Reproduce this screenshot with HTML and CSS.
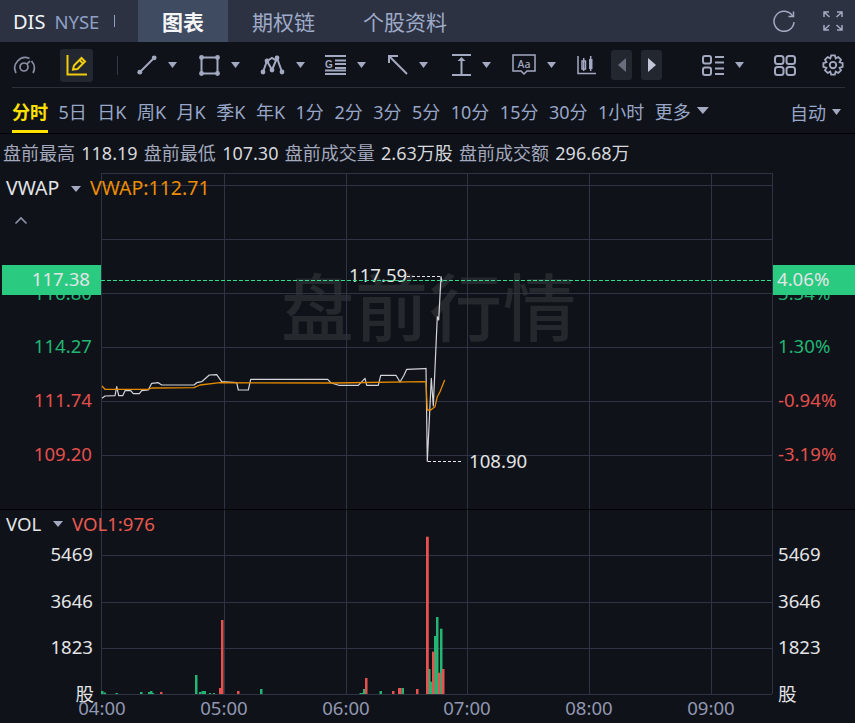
FILE: index.html
```html
<!DOCTYPE html>
<html lang="zh">
<head>
<meta charset="utf-8">
<title>DIS 图表</title>
<link rel="stylesheet" href="styles.css">
</head>
<body>
<div class="app">
  <header class="topbar">
    <div class="symbol"><span class="ticker">DIS</span><span class="market">NYSE</span><span class="pipe"></span></div>
    <nav class="tabs">
      <a class="tab active">图表</a>
      <a class="tab">期权链</a>
      <a class="tab">个股资料</a>
    </nav>
    <div class="top-actions">
      <svg class="i-thin" width="22" height="22" viewBox="0 0 22 22"><path d="M19.500 6A10 10 0 1 0 21 12" /><path d="M20.500 1.500V6.500H15.500" /></svg>
      <svg class="i-thin" width="20" height="20" viewBox="0 0 20 20"><path d="M1 6V1H6M1 1L6.500 6M14 1H19V6M19 1L13.500 6M1 14V19H6M1 19L6.500 14M19 14V19H14M19 19L13.500 14" /></svg>
    </div>
  </header>

  <section class="toolbar">
    <svg class="i-dim" width="24" height="18" viewBox="0 0 24 18"><path d="M4 17A10.500 10.500 0 0 1 17.500 2.500M19.500 5A10.500 10.500 0 0 1 21 17" /><circle cx="12" cy="11" r="4" /><path d="M15 8L18 5" /></svg>
    <button class="tool-on">
      <svg class="i-y" width="22" height="22" viewBox="0 0 22 22"><path d="M1.500 1V20.500H21" /><path d="M7 15.500L8 11.500L15.500 4L19 7.500L11.500 15Z" /><path d="M13.500 6L17 9.500" /></svg>
    </button>
    <span class="vsep"></span>
    <div class="tool ml-19"><svg class="i" width="20" height="20" viewBox="0 0 20 20"><path d="M3 17L17 3" /><circle class="dot" cx="2.800" cy="17.200" r="2.400"/><circle class="dot" cx="17.200" cy="2.800" r="2.400"/></svg><i class="caret"></i></div>
    <div class="tool"><svg class="i" width="21" height="21" viewBox="0 0 21 21"><path d="M2.500 2.500H18.500V18.500H2.500Z" /><circle class="dot" cx="2.500" cy="2.500" r="2.400"/><circle class="dot" cx="18.500" cy="2.500" r="2.400"/><circle class="dot" cx="2.500" cy="18.500" r="2.400"/><circle class="dot" cx="18.500" cy="18.500" r="2.400"/></svg><i class="caret"></i></div>
    <div class="tool ml-20"><svg class="i" width="25" height="20" viewBox="0 0 25 20"><path d="M3 17L7 6L12 15L17 3L22 17" /><path d="M7 6L12 3L17 6" /><circle class="dot" cx="3" cy="17" r="2.400"/><circle class="dot" cx="7" cy="6" r="2.400"/><circle class="dot" cx="12" cy="15" r="2.400"/><circle class="dot" cx="17" cy="3" r="2.400"/><circle class="dot" cx="22" cy="17" r="2.400"/></svg><i class="caret"></i></div>
    <div class="tool ml-20"><svg class="i" width="21" height="20" viewBox="0 0 21 20"><path d="M0 1H21M10 5.500H21M10 9H21M10 13H21M0 15.500H21M0 19H21" /><text class="g-letter" x="0" y="13">G</text></svg><i class="caret"></i></div>
    <div class="tool"><svg class="i" width="20" height="20" viewBox="0 0 20 20"><path d="M1 8V1H10M1 1L19 19" /></svg><i class="caret"></i></div>
    <div class="tool ml-24"><svg class="i" width="19" height="22" viewBox="0 0 19 22"><path d="M0 1H19M0 21H19M9.500 5V21" /><path class="dot" d="M5.500 7L9.500 3L13.500 7Z" /></svg><i class="caret"></i></div>
    <div class="tool ml-21"><svg class="i-thin" width="24" height="22" viewBox="0 0 24 22"><path d="M1 1H23V17H15L12 20L9 17H1Z" /><text class="aa-letter" x="5.500" y="13.500">Aa</text></svg><i class="caret"></i></div>
    <svg class="i-thin ml-21" width="19" height="20" viewBox="0 0 19 20"><path d="M1 1V18.500H19" /><rect x="5" y="6" width="3.500" height="8" /><rect class="dot" x="12" y="4" width="3.500" height="10" /><path d="M6.700 3V16M13.700 1V16" /></svg>
    <div class="nav-btns">
      <button class="nav-btn"><i class="arrow-l"></i></button>
      <button class="nav-btn"><i class="arrow-r"></i></button>
    </div>
    <div class="tool ml-40"><svg class="i" width="22" height="21" viewBox="0 0 22 21"><rect x="1" y="1" width="8" height="7.500" rx="2"/><rect x="1" y="12.500" width="8" height="7.500" rx="2"/><path d="M13 2H22M13 7.500H22M13 13.500H22M13 19H22" /></svg><i class="caret"></i></div>
    <svg class="i ml-30" width="22" height="21" viewBox="0 0 22 21"><rect x="1" y="1" width="8.500" height="8" rx="2.500"/><rect x="12.500" y="1" width="8.500" height="8" rx="2.500"/><rect x="1" y="12" width="8.500" height="8" rx="2.500"/><rect x="12.500" y="12" width="8.500" height="8" rx="2.500"/></svg>
    <svg class="i ml-26" width="22" height="22" viewBox="0 0 24 24"><circle cx="12" cy="12" r="3.500"/><path d="M10 1.500H14L15 4.800L17.800 3.300L20.700 6.200L19.200 9L22.500 10V14L19.200 15L20.700 17.800L17.800 20.700L15 19.200L14 22.500H10L9 19.200L6.200 20.700L3.300 17.800L4.800 15L1.500 14V10L4.800 9L3.300 6.200L6.200 3.300L9 4.800Z" /></svg>
  </section>

  <section class="periods">
    <a class="period active">分时</a>
    <a class="period">5日</a>
    <a class="period">日K</a>
    <a class="period">周K</a>
    <a class="period">月K</a>
    <a class="period">季K</a>
    <a class="period">年K</a>
    <a class="period">1分</a>
    <a class="period">2分</a>
    <a class="period">3分</a>
    <a class="period">5分</a>
    <a class="period">10分</a>
    <a class="period">15分</a>
    <a class="period">30分</a>
    <a class="period">1小时</a>
    <a class="period more">更多<i class="caret big"></i></a>
    <a class="period auto">自动<i class="caret"></i></a>
  </section>

  <section class="stats">盘前最高 <b>118.19</b> 盘前最低 <b>107.30</b> 盘前成交量 <b>2.63万股</b> 盘前成交额 <b>296.68万</b></section>

  <svg class="chart" width="855" height="551" viewBox="0 172 855 551">
    <text class="watermark" x="429" y="335" text-anchor="middle">盘前行情</text>

    <path class="grid" d="M101 173.500H772M101 185.500H772M101 239.500H772M101 293.500H772M101 347.500H772M101 401.500H772M101 455.500H772M101 555.500H772M101 602.500H772M101 648.500H772M101 694.500H772" />
    <path class="grid" d="M101.500 173V694M224.500 173V694M346.500 173V694M467.500 173V694M589.500 173V694M711.500 173V694M772.500 173V694" />
    <path class="split" d="M0 509.500H855" />

    <polyline class="price" points="102,398.300 105,396 115,395.700 116.700,386.700 118.700,395.700 122.700,395.700 125,390.700 130.700,390.700 133.300,393.700 139.300,393.700 141.700,390.700 148.300,390 151.700,383.300 158.300,382.700 161.700,385 194,385 196.700,382.700 201.700,381.700 209.300,375 216.700,374.700 221.700,381.700 236.700,382.700 238.300,390 248.300,390 250.700,379.300 327.700,379.300 330.700,382.700 338.700,385.300 358.300,385.300 365,378.300 366.700,385.300 378.300,385.300 380.700,375.300 396,375.300 400,382 404,375.300 406.700,369.300 425,368.700 426,368.300 427.300,461.300 429,426.700 431.300,378.300 433.300,406 435,368.300 437.300,316.700 438.700,320 441,276.700 442,281.700" />
    <polyline class="avg" points="102,386 105,389.300 148.300,389.300 151.700,388 194,387.700 200,385 220,382.700 333.300,383 425,381.700 426,382.300 427.300,410 430.700,410 435,406.700 437.300,396.700 440,391.700 444.700,380" />

    <path class="mark" d="M407 276.500H441M428 461.500H463" />
    <text class="t white" x="349" y="282">117.59</text>
    <text class="t white" x="469" y="468">108.90</text>

    <g class="bars-up">
      <rect x="101" y="691" width="2.500" height="3"/><rect x="103.500" y="692.500" width="2.500" height="1.500"/><rect x="115.500" y="693" width="2.500" height="1"/><rect x="140" y="692" width="2.500" height="2"/><rect x="148" y="692" width="2.500" height="2"/><rect x="150" y="691" width="2.500" height="3"/><rect x="152" y="693" width="2" height="1"/><rect x="195" y="675" width="2.500" height="19"/><rect x="199" y="692" width="2.500" height="2"/><rect x="201.500" y="691" width="2.500" height="3"/><rect x="203.500" y="691" width="2.500" height="3"/><rect x="209" y="693" width="2" height="1"/><rect x="213" y="693" width="2" height="1"/><rect x="260" y="689" width="2.500" height="5"/><rect x="359.500" y="693" width="2.500" height="1"/><rect x="361.500" y="693" width="2.500" height="1"/><rect x="363" y="689" width="2.500" height="5"/><rect x="379.500" y="691" width="2.500" height="3"/><rect x="401.500" y="688" width="2.500" height="6"/><rect x="428" y="669" width="2.500" height="25"/><rect x="430" y="681.700" width="2.500" height="12.300"/><rect x="434" y="636" width="2.500" height="58"/><rect x="436" y="617" width="2.500" height="77"/><rect x="440" y="628.700" width="2.500" height="65.300"/>
    </g>
    <g class="bars-down">
      <rect x="160" y="692" width="2.500" height="2"/><rect x="219" y="688" width="2.500" height="6"/><rect x="221" y="620" width="2.500" height="74"/><rect x="237" y="691" width="2.500" height="3"/><rect x="365" y="678" width="2.500" height="16"/><rect x="392" y="691" width="2.500" height="3"/><rect x="398" y="688" width="3.500" height="6"/><rect x="416" y="689" width="2.500" height="5"/><rect x="426" y="536.700" width="2.800" height="157.300"/><rect x="432" y="651.700" width="2.500" height="42.300"/><rect x="438" y="672.700" width="2.500" height="21.300"/><rect x="442" y="669" width="2.500" height="25"/>
    </g>

    <text class="t lg white" x="6" y="195">VWAP</text>
    <path class="tri" d="M71 186H81L76 192Z" />
    <text class="t lg orange" x="90" y="195">VWAP:112.71</text>
    <path class="chev" d="M15.500 223.500L21 218L26.500 223.500" />

    <text class="t up end" x="92" y="300">116.80</text>
    <text class="t up end" x="92" y="353">114.27</text>
    <text class="t down end" x="92" y="407">111.74</text>
    <text class="t down end" x="92" y="461">109.20</text>
    <text class="t up" x="778" y="300">3.54%</text>
    <text class="t up" x="778" y="353">1.30%</text>
    <text class="t down" x="778" y="407">-0.94%</text>
    <text class="t down" x="778" y="461">-3.19%</text>

    <rect class="tag" x="2" y="265" width="99" height="30"/>
    <rect class="tag" x="773" y="265" width="82" height="30"/>
    <path class="last" d="M101 280.500H772" />
    <text class="t white end" x="90" y="286">117.38</text>
    <text class="t white" x="777" y="286">4.06%</text>

    <text class="t white" x="6" y="531">VOL</text>
    <path class="tri" d="M53 521H63L58 527Z" />
    <text class="t red" x="72" y="531">VOL1:976</text>

    <text class="t white end" x="93" y="561">5469</text>
    <text class="t white end" x="93" y="608">3646</text>
    <text class="t white end" x="93" y="654">1823</text>
    <text class="t white end" x="94" y="701">股</text>
    <text class="t white" x="778" y="561">5469</text>
    <text class="t white" x="778" y="608">3646</text>
    <text class="t white" x="778" y="654">1823</text>
    <text class="t white" x="778" y="701">股</text>

    <text class="t axis mid" x="102" y="715">04:00</text>
    <text class="t axis mid" x="224" y="715">05:00</text>
    <text class="t axis mid" x="346" y="715">06:00</text>
    <text class="t axis mid" x="467" y="715">07:00</text>
    <text class="t axis mid" x="589" y="715">08:00</text>
    <text class="t axis mid" x="711" y="715">09:00</text>
  </svg>
</div>
</body>
</html>
```
FILE: styles.css
```css
* { box-sizing: border-box; }
html, body { margin: 0; padding: 0; background: #0f1218; }
body { width: 855px; height: 723px; overflow: hidden; font-family: "Noto Sans", "Noto Sans CJK SC", sans-serif; font-size: 18px; }
.app { display: flex; flex-direction: column; width: 855px; height: 723px; }

.topbar { height: 42px; background: #2c3242; display: flex; align-items: stretch; flex: none; }
.symbol { width: 138px; flex: none; display: flex; align-items: center; padding-left: 13px; }
.ticker { color: #f2f3f6; font-size: 20px; }
.market { color: #8fa0c4; font-size: 18.500px; margin-left: 9px; }
.pipe { width: 1px; height: 12px; background: #8fa0c4; margin-left: 15px; }
.tabs { display: flex; }
.tab { display: flex; align-items: center; justify-content: center; padding: 0 24px; font-size: 21px; color: #9eaac6; }
.tab.active { width: 90px; padding: 0; background: #3f4b60; color: #f4f5f7; font-weight: 700; }
.top-actions { margin-left: auto; display: flex; align-items: center; gap: 28px; padding-right: 12px; }

.i, .i-y, .i-thin, .i-dim { fill: none; flex: none; display: block; }
.i { stroke: #a4a9c2; stroke-width: 2; }
.i-thin { stroke: #a4a9c2; stroke-width: 1.500; }
.i-dim { stroke: #8a8fa6; stroke-width: 1.700; }
.i-y { stroke: #f0cd0e; stroke-width: 2; }
.dot { fill: #a4a9c2; stroke: none; }
.g-letter { font-family: "Liberation Sans", sans-serif; font-size: 10px; font-weight: 700; fill: #a4a9c2; stroke: none; }
.aa-letter { font-family: "Noto Sans", sans-serif; font-size: 10.500px; font-weight: 500; fill: #a4a9c2; stroke: none; }

.toolbar { height: 46px; flex: none; margin: 0 10px 0 12px; padding-top: 1px; display: flex; align-items: center; gap: 22px; border-bottom: 1px solid #2d3038; }
.tool-on { flex: none; margin-left: 2px; width: 33px; height: 33px; padding: 0; border: 0; border-radius: 3px; background: #23272f; display: flex; align-items: center; justify-content: center; }
.vsep { flex: none; width: 1px; height: 19px; background: #33373f; margin-left: 2px; }
.tool { flex: none; display: flex; align-items: center; gap: 11px; }
.ml-19 { margin-left: -3px; }
.ml-20 { margin-left: -2px; }
.ml-21 { margin-left: -1px; }
.ml-24 { margin-left: 2px; }
.ml-26 { margin-left: 4px; }
.ml-30 { margin-left: 8px; }
.ml-40 { margin-left: 18px; }
.caret { display: block; flex: none; width: 9px; height: 6px; background: #a4a9c2; clip-path: polygon(0 0, 100% 0, 50% 100%); }
.caret.big { width: 12px; height: 7px; margin-left: 6px; }
.nav-btns { flex: none; display: flex; gap: 9px; margin-left: -7px; }
.nav-btn { width: 21px; height: 30px; padding: 0; border: 0; border-radius: 3px; background: #23272f; display: flex; align-items: center; justify-content: center; }
.arrow-l { width: 0; height: 0; border-top: 7px solid transparent; border-bottom: 7px solid transparent; border-right: 8px solid #6a6e7c; }
.arrow-r { width: 0; height: 0; border-top: 7px solid transparent; border-bottom: 7px solid transparent; border-left: 8px solid #c2c6d6; }

.periods { height: 46px; flex: none; padding: 0 14px 0 12px; display: flex; align-items: stretch; gap: 10.500px; border-bottom: 1px solid #000; }
.period { display: flex; align-items: center; color: #98a6c8; font-size: 18px; white-space: nowrap; position: relative; }
.period.active { color: #ffe100; font-weight: 700; border-bottom: 3px solid #ffe100; padding-top: 3px; }
.period.auto { margin-left: auto; padding-top: 3px; gap: 6px; }

.stats { height: 38px; flex: none; padding-left: 3px; line-height: 38px; white-space: nowrap; color: #a3a8bd; font-size: 18px; word-spacing: 1.600px; }
.stats b { font-weight: 400; color: #d6d8dd; }

.chart { display: block; flex: none; }
.grid { fill: none; stroke: #2e3443; stroke-width: 1; }
.split { fill: none; stroke: #000; stroke-width: 1; }
.watermark { font-family: "Noto Sans CJK SC", sans-serif; font-size: 73px; font-weight: 500; fill: #25282d; letter-spacing: 1px; }
.price { fill: none; stroke: #d2d4d8; stroke-width: 1.200; stroke-linejoin: round; }
.avg { fill: none; stroke: #e68a00; stroke-width: 1.300; stroke-linejoin: round; }
.mark { fill: none; stroke: #e6e6e6; stroke-width: 1; stroke-dasharray: 3 2; }
.last { fill: none; stroke: #2ee08c; stroke-width: 1; stroke-dasharray: 4 2; }
.bars-up rect { fill: #23b573; }
.bars-down rect { fill: #e6524f; }
.tag { fill: #2acb80; }
.tri { fill: #a4a9c2; }
.chev { fill: none; stroke: #8f94ad; stroke-width: 1.600; }
.t { font-family: "Noto Sans", "Noto Sans CJK SC", sans-serif; font-size: 18.600px; }
.t.lg { font-size: 19.500px; }
.white { fill: #e3e4e7; }
.orange { fill: #ec8c00; }
.red { fill: #e8594f; }
.up { fill: #21b674; }
.down { fill: #e2504d; }
.axis { fill: #9297b2; }
.end { text-anchor: end; }
.mid { text-anchor: middle; }
```
